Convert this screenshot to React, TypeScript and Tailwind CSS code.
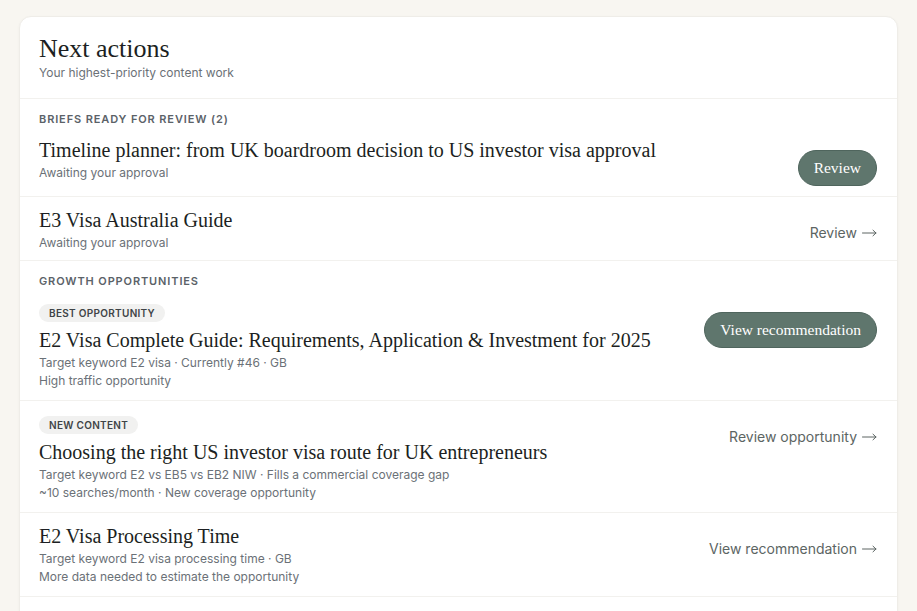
const serif = "font-['Liberation_Serif',serif]";

type Item = {
  badge?: string;
  title: string;
  lines: string[];
  action: { label: string; kind: "button" | "link" };
};

const briefs: Item[] = [
  {
    title: "Timeline planner: from UK boardroom decision to US investor visa approval",
    lines: ["Awaiting your approval"],
    action: { label: "Review", kind: "button" },
  },
  {
    title: "E3 Visa Australia Guide",
    lines: ["Awaiting your approval"],
    action: { label: "Review", kind: "link" },
  },
];

const growth: Item[] = [
  {
    badge: "BEST OPPORTUNITY",
    title: "E2 Visa Complete Guide: Requirements, Application & Investment for 2025",
    lines: ["Target keyword E2 visa · Currently #46 · GB", "High traffic opportunity"],
    action: { label: "View recommendation", kind: "button" },
  },
  {
    badge: "NEW CONTENT",
    title: "Choosing the right US investor visa route for UK entrepreneurs",
    lines: [
      "Target keyword E2 vs EB5 vs EB2 NIW · Fills a commercial coverage gap",
      "~10 searches/month · New coverage opportunity",
    ],
    action: { label: "Review opportunity", kind: "link" },
  },
  {
    title: "E2 Visa Processing Time",
    lines: ["Target keyword E2 visa processing time · GB", "More data needed to estimate the opportunity"],
    action: { label: "View recommendation", kind: "link" },
  },
];

function Arrow() {
  return (
    <svg width="15" height="8" viewBox="0 0 15 8" fill="none" className="ml-[5px] inline-block align-middle">
      <path d="M0.5 4H14M11 1.2L14 4L11 6.8" stroke="currentColor" strokeWidth="1" strokeLinecap="round" strokeLinejoin="round" />
    </svg>
  );
}

function Row({ item, first }: { item: Item; first?: boolean }) {
  const isButton = item.action.kind === "button";
  const pb = item.lines.length > 1 || isButton ? "pb-[10px]" : "pb-[8px]";
  return (
    <div
      className={`flex items-start justify-between gap-6 pl-[19px] pr-5 pt-[10px] ${pb} ${first ? "" : "border-t border-[#f2f1ee]"}`}
    >
      <div className="min-w-0">
        {item.badge && (
          <span className="mb-[5px] mt-[5px] inline-block rounded-full bg-[#f1f1f0] px-[10px] py-[2px] text-[10px] font-semibold leading-[14px] tracking-[0.03em] text-[#3f4447]">
            {item.badge}
          </span>
        )}
        <div className={`${serif} text-[20px] leading-[26px] text-[#1c1f22]`}>{item.title}</div>
        <div className="mt-px">
          {item.lines.map((l) => (
            <div key={l} className="text-[12px] leading-[18px] text-[#6b7177]">
              {l}
            </div>
          ))}
        </div>
      </div>
      {isButton ? (
        <button
          className={`${serif} mt-[13px] shrink-0 rounded-full border border-[#4f655d] bg-[#5f766d] px-[15px] py-[7px] text-[15.5px] leading-[20px] text-white`}
        >
          {item.action.label}
        </button>
      ) : (
        <span className="mt-4 flex shrink-0 items-center text-[14px] leading-[20px] text-[#5c6563]">
          {item.action.label}
          <Arrow />
        </span>
      )}
    </div>
  );
}

function SectionLabel({ children }: { children: string }) {
  return (
    <div className="border-t border-[#f2f1ee] pl-[19px] pr-5 pt-[12px] text-[11px] font-semibold leading-[16px] tracking-[0.08em] text-[#5b6268]">
      {children}
    </div>
  );
}

export default function App() {
  return (
    <div className="min-h-screen overflow-hidden bg-[#f8f6f1] px-[19px] pt-4 font-['Inter','Liberation_Sans',sans-serif]">
      <div className="overflow-hidden rounded-t-xl border border-[#efede8] bg-white pb-10 shadow-[0_1px_3px_rgba(0,0,0,0.04)]">
        <div className="pb-[17px] pl-[19px] pr-5 pt-4">
          <h1 className={`${serif} text-[26px] leading-[32px] text-[#1c1f22]`}>Next actions</h1>
          <p className="text-[12px] leading-[16px] text-[#6b7177]">Your highest-priority content work</p>
        </div>
        <SectionLabel>BRIEFS READY FOR REVIEW (2)</SectionLabel>
        {briefs.map((b, i) => (
          <Row key={b.title} item={b} first={i === 0} />
        ))}
        <SectionLabel>GROWTH OPPORTUNITIES</SectionLabel>
        {growth.map((g, i) => (
          <Row key={g.title} item={g} first={i === 0} />
        ))}
        <div className="border-t border-[#f2f1ee]" />
      </div>
    </div>
  );
}
